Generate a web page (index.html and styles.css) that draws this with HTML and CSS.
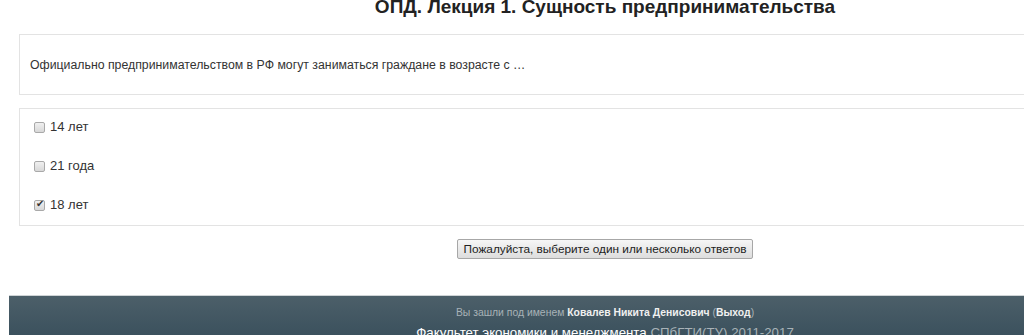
FILE: index.html
```html
<!DOCTYPE html>
<html lang="ru">
<head>
  <meta charset="UTF-8">
  <title>ОПД. Лекция 1. Сущность предпринимательства</title>
  <link rel="stylesheet" href="styles.css">
</head>
<body>
  <div class="page">
    <div class="content">
      <h2 class="lesson-title">ОПД. Лекция 1. Сущность предпринимательства</h2>

      <!-- Question -->
      <div class="box question">
        <p>Официально предпринимательством в РФ могут заниматься граждане в возрасте с …</p>
      </div>

      <!-- Answers -->
      <div class="box answers">
        <label class="option"><input type="checkbox" class="check"> 14 лет</label>
        <label class="option"><input type="checkbox" class="check"> 21 года</label>
        <label class="option"><input type="checkbox" class="check" checked> 18 лет</label>
      </div>

      <div class="actions">
        <button class="submit">Пожалуйста, выберите один или несколько ответов</button>
      </div>
    </div>

    <!-- Footer -->
    <div class="footer">
      <div class="login-info">Вы зашли под именем <a href="#">Ковалев Никита Денисович</a> (<a href="#">Выход</a>)</div>
      <div class="copy"><span class="faculty">Факультет экономики и менеджмента</span> СПбГТИ(ТУ) 2011-2017</div>
    </div>
  </div>
</body>
</html>
```

FILE: styles.css
```css
/* General */
html, body {
  margin: 0;
  padding: 0;
  background: #fff;
  overflow: hidden;
}

body {
  font-family: 'Liberation Sans', Arial, sans-serif;
  font-size: 13px;
  color: #333;
}

.page {
  width: 1192px;
  margin-left: 9px;
}

.content {
  padding: 0 10px;
}

/* Title */
.lesson-title {
  margin: -5px 0 0;
  font-size: 19px;
  line-height: 23px;
  font-weight: bold;
  color: #222;
  text-align: center;
}

/* Boxes */
.box {
  border: 1px solid #e3e3e3;
  background: #fff;
}

.question {
  margin-top: 16px;
  height: 59px;
  display: flex;
  align-items: center;
  padding-left: 10px;
}

.question p {
  margin: 0;
  font-size: 12.3px;
}

.answers {
  margin-top: 13px;
  height: 118px;
  box-sizing: border-box;
  display: flex;
  flex-direction: column;
  gap: 23px;
  padding: 10px 0 0 14px;
}

.option {
  display: flex;
  align-items: center;
  gap: 5px;
  line-height: 16px;
  color: #333;
}

/* Checkboxes drawn to look like the old style */
.check {
  appearance: none;
  -webkit-appearance: none;
  width: 11px;
  height: 11px;
  margin: 0;
  border: 1px solid #a9a9a9;
  border-radius: 2px;
  background: linear-gradient(#f0f0f0, #d8d8d8);
  position: relative;
}

.check:checked::after {
  content: "✔";
  position: absolute;
  left: 1px;
  top: -3px;
  font-size: 10px;
  color: #333;
}

/* Submit */
.actions {
  text-align: center;
  margin-top: 13px;
}

.submit {
  font-family: 'Liberation Sans', Arial, sans-serif;
  font-size: 11.8px;
  color: #222;
  padding: 1px 6px;
  height: 20px;
  border: 1px solid #a7a7a7;
  border-radius: 2px;
  background: linear-gradient(#f6f6f6, #dddddd);
}

/* Footer */
.footer {
  margin-top: 36px;
  border-top: 1px solid #cfd4d6;
  background: linear-gradient(#4c5f69, #2e4654);
  text-align: center;
  padding-top: 10px;
  height: 60px;
}

.login-info {
  font-size: 10.4px;
  line-height: 14px;
  color: #a8b2b7;
}

.login-info a {
  color: #f0f0f0;
  font-weight: bold;
  text-decoration: none;
}

.copy {
  margin-top: 3px;
  font-size: 13.3px;
  line-height: 20px;
  color: #a8b2b7;
}

.faculty {
  color: #fff;
}
```
